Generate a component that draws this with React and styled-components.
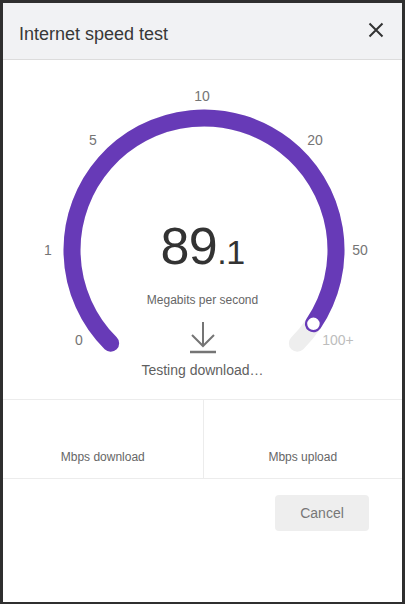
import React from "react";
import styled, { createGlobalStyle } from "styled-components";

const Global = createGlobalStyle`
  html, body { margin: 0; padding: 0; background: #2f2f2f; }
  body { font-family: "Liberation Sans", Arial, sans-serif; }
  #root { padding: 3px 3px 2px 3px; }
`;

const Dialog = styled.div`
  width: 399px;
  height: 599px;
  background: #ffffff;
  display: flex;
  flex-direction: column;
`;

const Header = styled.div`
  height: 56px;
  flex: none;
  background: #f1f2f4;
  border-bottom: 1px solid #dcdcdc;
  display: flex;
  align-items: center;
  justify-content: space-between;
  padding: 0 16px 0 16px;
`;

const Title = styled.h1`
  margin: 0;
  margin-top: 6px;
  font-size: 18px;
  font-weight: 400;
  color: #383838;
`;

const CloseButton = styled.button`
  border: 0;
  background: none;
  padding: 0;
  width: 20px;
  height: 20px;
  display: flex;
  align-items: center;
  justify-content: center;
  margin-top: -3px;
  cursor: pointer;
`;

const Gauge = styled.div`
  position: relative;
  height: 339px;
  flex: none;
  border-bottom: 1px solid #ececec;
`;

const Readout = styled.div`
  position: absolute;
  left: 0;
  right: 0;
  top: 160px;
  display: flex;
  flex-direction: column;
  align-items: center;
`;

const Speed = styled.div`
  font-size: 52px;
  line-height: 52px;
  color: #333;
  letter-spacing: -0.5px;
`;

const Decimal = styled.span`
  font-size: 34px;
`;

const Unit = styled.div`
  margin-top: 15px;
  font-size: 12px;
  line-height: 14px;
  color: #666;
`;

const ArrowBox = styled.div`
  margin-top: 14px;
  height: 34px;
`;

const Status = styled.div`
  margin-top: 7px;
  font-size: 14px;
  line-height: 16px;
  color: #5f5f5f;
`;

const Stats = styled.div`
  height: 78px;
  flex: none;
  display: grid;
  grid-template-columns: 1fr 1fr;
  border-bottom: 1px solid #ececec;
`;

const Stat = styled.div`
  display: flex;
  flex-direction: column;
  justify-content: flex-end;
  align-items: center;
  padding-bottom: 14px;
  font-size: 12px;
  line-height: 14px;
  color: #666;
  border-left: ${(p) => (p.$divider ? "1px solid #ececec" : "0")};
`;

const Footer = styled.div`
  display: flex;
  justify-content: flex-end;
  padding: 16px 33px 0 0;
`;

const Cancel = styled.button`
  width: 94px;
  height: 36px;
  border: 0;
  border-radius: 4px;
  background: #eeeeee;
  color: #777;
  font-family: inherit;
  font-size: 14px;
`;

const Label = styled.text`
  font-family: "Liberation Sans", Arial, sans-serif;
  font-size: 14px;
  fill: ${(p) => (p.$muted ? "#bdbdbd" : "#757575")};
`;

const CX = 201;
const CY = 190;
const R = 132;

function pt(deg) {
  const a = (deg * Math.PI) / 180;
  return [CX + R * Math.cos(a), CY + R * Math.sin(a)];
}

function arc(from, to) {
  const [x1, y1] = pt(from);
  const [x2, y2] = pt(to);
  const large = to - from > 180 ? 1 : 0;
  return `M ${x1} ${y1} A ${R} ${R} 0 ${large} 1 ${x2} ${y2}`;
}

const labels = [
  ["10", 199, 36],
  ["5", 90, 80],
  ["20", 312, 80],
  ["1", 45, 190],
  ["50", 357, 190],
  ["0", 76, 280],
  ["100+", 335, 280, true],
];

export default function App() {
  const end = 394;
  const [dx, dy] = pt(end);
  return (
    <>
      <Global />
      <Dialog>
        <Header>
          <Title>Internet speed test</Title>
          <CloseButton aria-label="Close">
            <svg width="16" height="16" viewBox="0 0 16 16">
              <path d="M1.5 1.5 L14.5 14.5 M14.5 1.5 L1.5 14.5" stroke="#333" strokeWidth="2" fill="none" />
            </svg>
          </CloseButton>
        </Header>
        <Gauge>
          <svg width="399" height="339" viewBox="0 0 399 339">
            <path d={arc(135, 405)} stroke="#eeeeee" strokeWidth="17" fill="none" strokeLinecap="round" />
            <path d={arc(135, end)} stroke="#673ab7" strokeWidth="17" fill="none" strokeLinecap="round" />
            <circle cx={dx} cy={dy} r="7" fill="#fff" stroke="#673ab7" strokeWidth="1.5" />
            {labels.map(([t, x, y, m]) => (
              <Label key={t} x={x} y={y} textAnchor="middle" dominantBaseline="central" $muted={m}>
                {t}
              </Label>
            ))}
          </svg>
          <Readout>
            <Speed>
              89<Decimal>.1</Decimal>
            </Speed>
            <Unit>Megabits per second</Unit>
            <ArrowBox>
              <svg width="26" height="34" viewBox="0 0 26 34">
                <path d="M13 1 V25 M2 14 L13 25 L24 14" stroke="#757575" strokeWidth="2" fill="none" />
                <path d="M0 31 H26" stroke="#757575" strokeWidth="2.5" />
              </svg>
            </ArrowBox>
            <Status>Testing download…</Status>
          </Readout>
        </Gauge>
        <Stats>
          <Stat>Mbps download</Stat>
          <Stat $divider>Mbps upload</Stat>
        </Stats>
        <Footer>
          <Cancel>Cancel</Cancel>
        </Footer>
      </Dialog>
    </>
  );
}
